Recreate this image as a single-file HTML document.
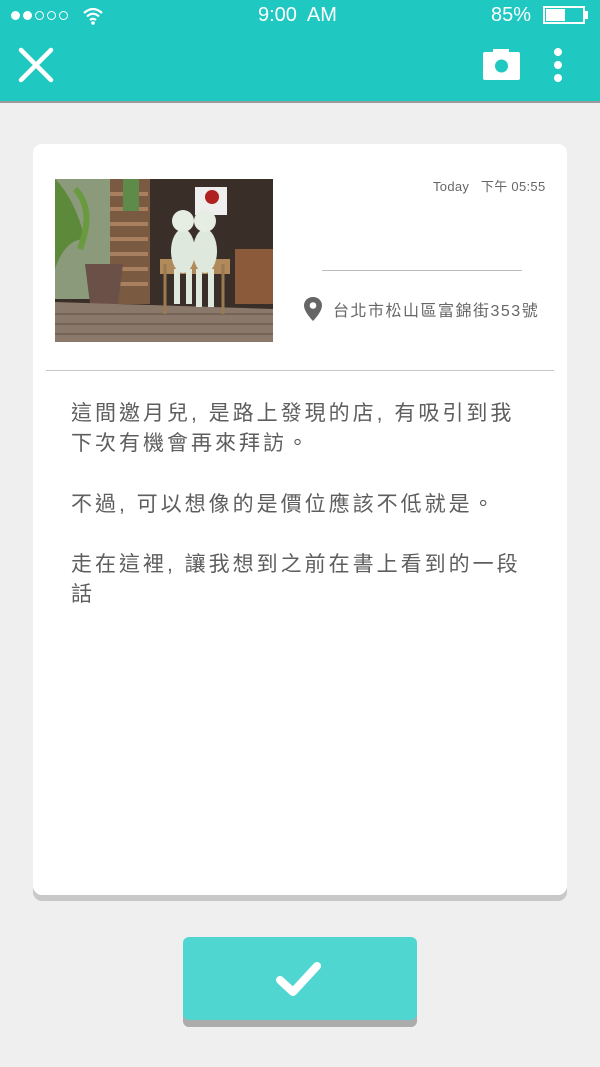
<!DOCTYPE html>
<html><head><meta charset="utf-8"><style>
*{margin:0;padding:0;box-sizing:border-box}
body{width:600px;height:1067px;background:#efefef;position:relative;overflow:hidden;font-family:"Liberation Sans","Noto Sans CJK TC",sans-serif}
.bar{position:absolute;left:0;top:0;width:600px;height:103px;background:#1fc8c0;border-bottom:2px solid #9a9a9a}
.w{position:absolute;color:#fff}
.card{position:absolute;left:33px;top:144px;width:534px;height:751px;background:#fff;border-radius:9px;box-shadow:0 6px 0 #c8c8c8}
.t{position:absolute;left:71px;font-size:21px;letter-spacing:3px;color:#5e5e5e;white-space:nowrap;line-height:30px}
.btn{position:absolute;left:183px;top:937px;width:234px;height:83px;background:#50d6d0;border-radius:6px;box-shadow:0 7px 0 #acacac}
.d{position:absolute;top:11px;width:9px;height:9px;border-radius:50%}
</style></head><body>
<div class="bar"></div>
<div class="d" style="left:11px;background:#fff"></div>
<div class="d" style="left:23px;background:#fff"></div>
<div class="d" style="left:35px;border:1.3px solid #fff"></div>
<div class="d" style="left:47px;border:1.3px solid #fff"></div>
<div class="d" style="left:59px;border:1.3px solid #fff"></div>
<svg class="w" style="left:82px;top:7px" width="22" height="18" viewBox="0 0 22 18"><path d="M2 6 Q11 -2 20 6" stroke="#fff" stroke-width="2.2" fill="none"/><path d="M5 9.5 Q11 4 17 9.5" stroke="#fff" stroke-width="2.2" fill="none"/><path d="M8 13 Q11 10.5 14 13" stroke="#fff" stroke-width="2.2" fill="none"/><circle cx="11" cy="16" r="1.8" fill="#fff"/></svg>
<div class="w" style="left:258px;top:4px;font-size:20px">9:00&nbsp; AM</div>
<div class="w" style="left:491px;top:4px;font-size:20px">85%</div>
<div style="position:absolute;left:543px;top:6px;width:42px;height:18px;border:2px solid #fff"><div style="position:absolute;left:1px;top:1px;width:19px;height:12px;background:#fff"></div></div>
<div style="position:absolute;left:585px;top:11px;width:3px;height:8px;background:#fff"></div>
<svg style="position:absolute;left:18px;top:47px" width="36" height="36"><path d="M3 3 L33 33 M33 3 L3 33" stroke="#fff" stroke-width="4.5" stroke-linecap="round"/></svg>
<svg style="position:absolute;left:483px;top:48px" width="38" height="32" viewBox="0 0 38 32"><rect x="0" y="4" width="37" height="28" rx="2" fill="#fff"/><rect x="10" y="1" width="16" height="5" fill="#fff"/><circle cx="18.5" cy="18" r="6.5" fill="#1fc8c0"/></svg>
<div style="position:absolute;left:554px;top:48px;width:8px;height:8px;border-radius:50%;background:#fff"></div>
<div style="position:absolute;left:554px;top:61px;width:8px;height:8px;border-radius:50%;background:#fff"></div>
<div style="position:absolute;left:554px;top:74px;width:8px;height:8px;border-radius:50%;background:#fff"></div>

<div class="card"></div>
<svg style="position:absolute;left:55px;top:179px" width="218" height="163" viewBox="0 0 218 163">
<rect width="218" height="163" fill="#3a2e28"/>
<rect x="0" y="0" width="60" height="120" fill="#8a9a7a"/>
<rect x="55" y="0" width="40" height="125" fill="#7a5a40"/>
<g stroke="#a88060" stroke-width="4"><path d="M55 15h38M55 30h38M55 45h38M55 60h38M55 75h38M55 90h38M55 105h38"/></g>
<rect x="68" y="0" width="16" height="32" fill="#5e8a4a"/>
<rect x="140" y="8" width="32" height="28" fill="#eee"/><circle cx="157" cy="18" r="7" fill="#b02020"/>
<path d="M0 0 Q20 20 30 60 Q10 60 0 90z" fill="#5c8a3a"/>
<path d="M20 10 Q40 30 25 70" stroke="#6a9a40" stroke-width="6" fill="none"/>
<path d="M30 85 h38 l-5 40 h-28z" fill="#6b5048"/>
<polygon points="0,123 218,130 218,163 0,163" fill="#8a786a"/>
<g stroke="#6d5d50" stroke-width="1.5"><path d="M0 135h218M0 145h218M0 155h218"/></g>
<rect x="180" y="70" width="38" height="55" fill="#8a5a3a"/>
<path d="M105 80 h70 v15 h-70z" fill="#b08a5a"/>
<path d="M110 85 v50 M168 85 v50" stroke="#9a7a50" stroke-width="3"/>
<ellipse cx="128" cy="72" rx="12" ry="22" fill="#dfe8dc"/><ellipse cx="150" cy="72" rx="12" ry="22" fill="#dfe8dc"/>
<circle cx="128" cy="42" r="11" fill="#e6ede2"/><circle cx="150" cy="42" r="11" fill="#e6ede2"/>
<path d="M122 90 v35 M134 90 v35 M144 90 v38 M156 90 v38" stroke="#dfe8dc" stroke-width="6"/>
</svg>
<div style="position:absolute;left:433px;top:176px;font-size:13px;letter-spacing:0.3px;color:#666;white-space:nowrap">Today&nbsp;&nbsp; 下午 05:55</div>
<div style="position:absolute;left:322px;top:270px;width:200px;height:1px;background:#bbb"></div>
<svg style="position:absolute;left:303px;top:296px" width="20" height="26" viewBox="0 0 20 26"><path d="M10 1 C4.5 1 1 5 1 9.5 C1 16 10 25 10 25 C10 25 19 16 19 9.5 C19 5 15.5 1 10 1z" fill="#666"/><circle cx="10" cy="9.5" r="3.3" fill="#fff"/></svg>
<div style="position:absolute;left:333px;top:297px;font-size:16px;letter-spacing:1.5px;color:#666;white-space:nowrap">台北市松山區富錦街353號</div>
<div style="position:absolute;left:46px;top:370px;width:508px;height:1px;background:#c8c8c8"></div>
<div class="t" style="top:399px">這間邀月兒, 是路上發現的店, 有吸引到我</div>
<div class="t" style="top:429px">下次有機會再來拜訪。</div>
<div class="t" style="top:490px">不過, 可以想像的是價位應該不低就是。</div>
<div class="t" style="top:550px">走在這裡, 讓我想到之前在書上看到的一段</div>
<div class="t" style="top:580px">話</div>
<div class="btn"></div>
<svg style="position:absolute;left:270px;top:955px" width="60" height="50"><path d="M10 25 L23 37 L47 11" stroke="#fff" stroke-width="8" fill="none" stroke-linecap="round" stroke-linejoin="round"/></svg>
</body></html>
